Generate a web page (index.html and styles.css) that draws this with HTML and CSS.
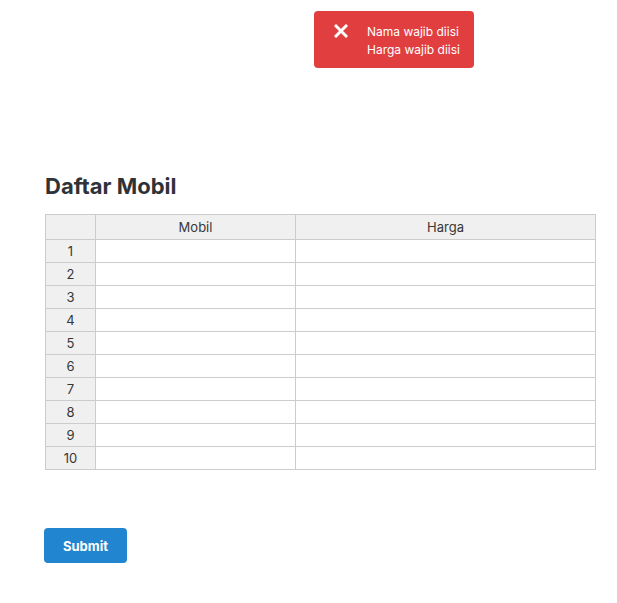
FILE: index.html
```html
<!DOCTYPE html>
<html>
<head>
<meta charset="utf-8">
<link rel="stylesheet" href="styles.css">
</head>
<body>
<div class="toast">
  <svg class="toast-icon" width="14" height="14" viewBox="0 0 14 14"><path d="M2 2 L12 12 M12 2 L2 12" stroke="#fff" stroke-width="3" stroke-linecap="square"/></svg>
  <div class="toast-text">
    <div>Nama wajib diisi</div>
    <div>Harga wajib diisi</div>
  </div>
</div>
<main class="page">
  <h1 class="title">Daftar Mobil</h1>
  <table class="grid">
    <thead>
      <tr><th class="rowhead"></th><th class="c-mobil">Mobil</th><th class="c-harga">Harga</th></tr>
    </thead>
    <tbody>
      <tr><th class="rowhead">1</th><td></td><td></td></tr>
      <tr><th class="rowhead">2</th><td></td><td></td></tr>
      <tr><th class="rowhead">3</th><td></td><td></td></tr>
      <tr><th class="rowhead">4</th><td></td><td></td></tr>
      <tr><th class="rowhead">5</th><td></td><td></td></tr>
      <tr><th class="rowhead">6</th><td></td><td></td></tr>
      <tr><th class="rowhead">7</th><td></td><td></td></tr>
      <tr><th class="rowhead">8</th><td></td><td></td></tr>
      <tr><th class="rowhead">9</th><td></td><td></td></tr>
      <tr><th class="rowhead">10</th><td></td><td></td></tr>
    </tbody>
  </table>
  <button class="submit" type="button">Submit</button>
</main>
</body>
</html>
```
FILE: styles.css
```css
* { box-sizing: border-box; }
html, body { margin: 0; padding: 0; background: #fff; }
body { font-family: Inter, "Noto Sans", sans-serif; color: #373737; }

.page {
  padding: 173px 0 0 44px;
  display: flex;
  flex-direction: column;
  align-items: flex-start;
}

.title {
  margin: 0 0 0 1px;
  font-size: 22px;
  line-height: 27px;
  font-weight: 700;
  color: #2f3337;
}

.grid {
  margin: 14px 0 0 1px;
  border-collapse: collapse;
  table-layout: fixed;
  font-size: 13px;
  color: #373737;
}
.grid th, .grid td {
  border: 1px solid #cccccc;
  padding: 0 4px;
  height: 23px;
  font-weight: 400;
  text-align: center;
}
.grid thead th { height: 25px; background: #f0f0f0; }
.grid .rowhead { width: 50px; background: #f0f0f0; }
.grid .c-mobil { width: 200px; }
.grid .c-harga { width: 300px; }
.grid td { background: #fff; }

.submit {
  margin-top: 58px;
  width: 83px;
  height: 35px;
  border: 0;
  border-radius: 4px;
  background: #2185d0;
  color: #fff;
  font-family: Inter, "Noto Sans", sans-serif;
  font-weight: 700;
  font-size: 13px;
  padding: 0;
}

.toast {
  position: absolute;
  left: 314px;
  top: 11px;
  width: 160px;
  height: 57px;
  background: #e03e3f;
  border-radius: 4px;
  display: flex;
  align-items: flex-start;
  padding: 12px 0 0 20px;
  color: #fff;
  font-size: 12px;
  line-height: 18px;
}
.toast-icon { margin-top: 1px; flex: none; }
.toast-text { margin-left: 19px; }
```
